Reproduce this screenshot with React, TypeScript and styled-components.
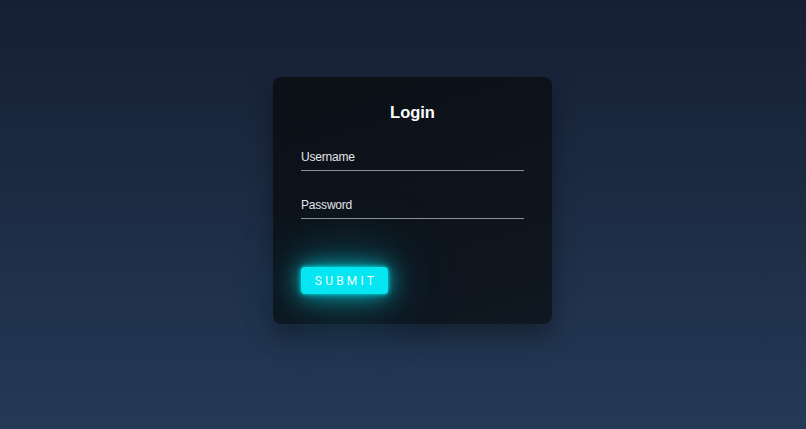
import React, { useState } from 'react';
import styled, { createGlobalStyle } from 'styled-components';

const GlobalStyle = createGlobalStyle`
  html, body {
    margin: 0;
    padding: 0;
    height: 100%;
  }
  body {
    font-family: "Liberation Sans", Arial, sans-serif;
    background: linear-gradient(180deg, #161f33 0%, #1d2c44 50%, #243a57 100%);
    min-height: 100vh;
  }
`;

const Page = styled.div`
  min-height: 100vh;
  display: flex;
  justify-content: center;
  align-items: flex-start;
  padding: 77px 0 0 19px;
  box-sizing: border-box;
`;

const Card = styled.form`
  width: 279px;
  box-sizing: border-box;
  padding: 25px 28px 30px;
  background: linear-gradient(160deg, rgba(11, 15, 21, 0.95) 0%, rgba(14, 21, 30, 0.92) 100%);
  border-radius: 8px;
  box-shadow: 0 12px 24px rgba(0, 0, 0, 0.35);
  display: flex;
  flex-direction: column;
`;

const Title = styled.h2`
  margin: 0 0 23px;
  font-size: 16.5px;
  line-height: 21px;
  font-weight: 700;
  color: #ffffff;
  text-align: center;
`;

const Field = styled.label`
  display: flex;
  align-items: flex-end;
  height: 24px;
  border-bottom: 1px solid #8b9098;
  margin-bottom: ${(p: { $gap: number }) => p.$gap}px;
`;

const Input = styled.input`
  width: 100%;
  border: none;
  outline: none;
  background: transparent;
  padding: 0 0 5px;
  font-family: "Liberation Sans", Arial, sans-serif;
  font-size: 12px;
  letter-spacing: -0.2px;
  line-height: 16px;
  color: #eceef0;

  &::placeholder {
    color: #e4e6e8;
    opacity: 1;
  }
`;

const SubmitButton = styled.button`
  align-self: flex-start;
  width: 87px;
  height: 27px;
  border: none;
  border-radius: 4px;
  background: #05e6f2;
  color: #e8ffff;
  font-family: Roboto, "Liberation Sans", Arial, sans-serif;
  font-size: 12px;
  font-weight: 400;
  letter-spacing: 3.2px;
  padding: 0 0 0 3px;
  cursor: pointer;
  box-shadow: 0 0 5px #03e9f4, 0 0 22px rgba(3, 233, 244, 0.75),
    0 0 50px rgba(3, 233, 244, 0.38), 0 0 100px rgba(3, 233, 244, 0.18);
`;

const App: React.FC = () => {
  const [username, setUsername] = useState('');
  const [password, setPassword] = useState('');

  return (
    <>
      <GlobalStyle />
      <Page>
        <Card onSubmit={(e) => e.preventDefault()}>
          <Title>Login</Title>
          <Field $gap={23}>
            <Input
              placeholder="Username"
              value={username}
              onChange={(e) => setUsername(e.target.value)}
            />
          </Field>
          <Field $gap={48}>
            <Input
              type="password"
              placeholder="Password"
              value={password}
              onChange={(e) => setPassword(e.target.value)}
            />
          </Field>
          <SubmitButton type="submit">SUBMIT</SubmitButton>
        </Card>
      </Page>
    </>
  );
};

export default App;
